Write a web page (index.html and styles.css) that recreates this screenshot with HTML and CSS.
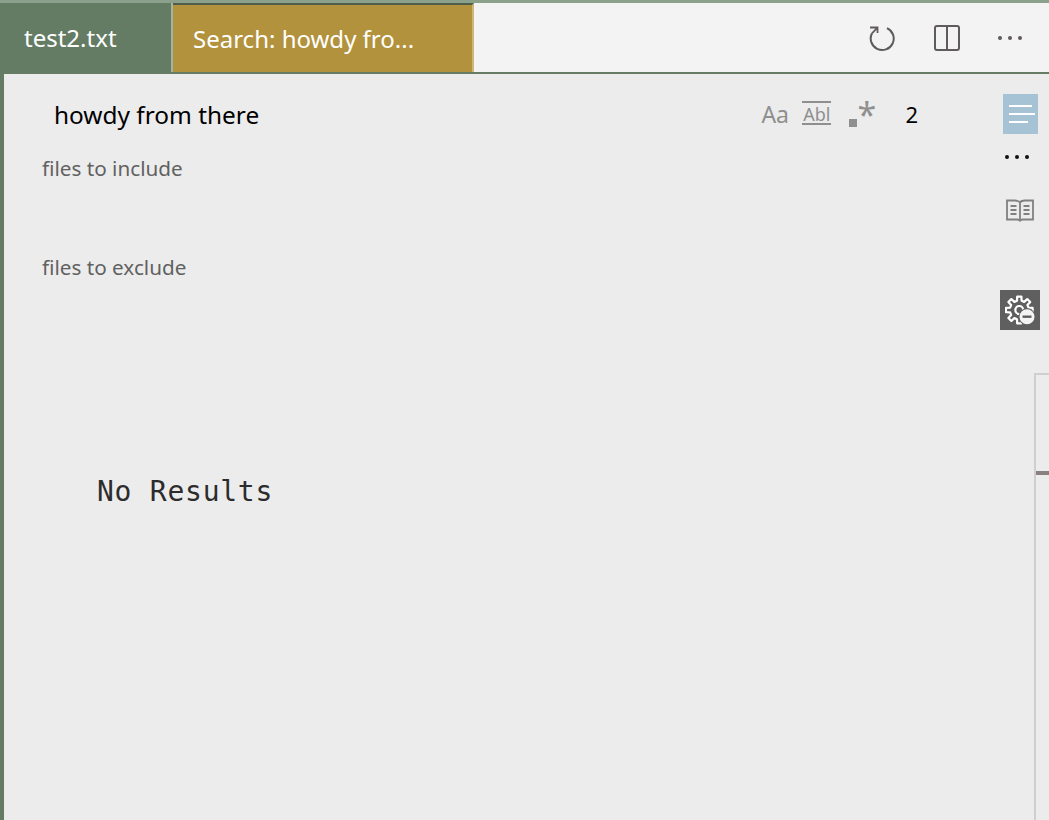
FILE: index.html
```html
<!DOCTYPE html>
<html lang="en">
<head>
<meta charset="utf-8">
<title>Search</title>
<link rel="stylesheet" href="styles.css">
</head>
<body>
<div class="app">
  <div class="tabbar">
    <div class="tab tab-file">test2.txt</div>
    <div class="tab tab-search">Search: howdy fro...</div>
    <div class="actions">
      <svg class="act act-refresh" viewBox="0 0 28 28" width="28" height="28" fill="none" stroke="#5f5a5c" stroke-width="2">
        <path d="M19 4.100A11.500 11.500 0 1 1 4 9.300"/>
        <path d="M2 3.500H9.500V9M9.500 3.500L4 9.300" stroke-width="1.800"/>
      </svg>
      <svg class="act act-split" viewBox="0 0 28 28" width="28" height="28" fill="none" stroke="#5f5a5c" stroke-width="2">
        <rect x="2" y="2" width="24" height="24" rx="2"/>
        <path d="M14 2V26"/>
      </svg>
      <svg class="act act-more" viewBox="0 0 26 6" width="26" height="6" fill="#5f5a5c">
        <circle cx="3" cy="3" r="2"/><circle cx="13" cy="3" r="2"/><circle cx="23" cy="3" r="2"/>
      </svg>
    </div>
  </div>
  <div class="main">
    <div class="panel">
      <div class="query-row">
        <span class="query">howdy from there</span>
        <div class="opts">
          <span class="opt-case">Aa</span>
          <span class="opt-word">Abl</span>
          <span class="opt-regex"><i class="dot"></i><span class="star">*</span></span>
          <span class="count">2</span>
        </div>
      </div>
      <div class="label label-include">files to include</div>
      <div class="label label-exclude">files to exclude</div>
      <div class="empty">No Results</div>
    </div>
    <div class="side">
      <div class="tile tile-list">
        <svg viewBox="0 0 28 20" width="28" height="20" fill="none" stroke="#fff" stroke-width="2">
          <path d="M1 2H24M1 10H27M1 18H20"/>
        </svg>
      </div>
      <svg class="side-more" viewBox="0 0 26 6" width="26" height="6" fill="#111">
        <circle cx="3" cy="3" r="2"/><circle cx="13" cy="3" r="2"/><circle cx="23" cy="3" r="2"/>
      </svg>
      <svg class="side-book" viewBox="0 0 28 24" width="28" height="24" fill="none" stroke="#808080" stroke-width="1.800">
        <path d="M14 3.500C13 2 11 1.500 9 1.500H1V20.500H11C12.500 20.500 14 21 14 22.500C14 21 15.500 20.500 17 20.500H27V1.500H19C17 1.500 15 2 14 3.500ZM14 3.500V22"/>
        <path d="M4.500 7H10.500M4.500 11H10.500M4.500 15H10.500M17.500 7H23.500M17.500 11H23.500M17.500 15H23.500"/>
      </svg>
      <div class="tile tile-gear">
        <svg viewBox="0 0 30 30" width="30" height="30">
          <g transform="translate(14.300 15)" fill="none" stroke="#fff" stroke-width="2.200" stroke-linejoin="round">
            <polygon points="2.300,-9.220 4.890,-8.140 7.940,-10.920 10.920,-7.940 8.140,-4.890 9.220,-2.300 13.330,-2.110 13.330,2.110 9.220,2.300 8.140,4.890 10.920,7.940 7.940,10.920 4.890,8.140 2.300,9.220 2.110,13.330 -2.110,13.330 -2.300,9.220 -4.890,8.140 -7.940,10.920 -10.920,7.940 -8.140,4.890 -9.220,2.300 -13.330,2.110 -13.330,-2.110 -9.220,-2.300 -8.140,-4.890 -10.920,-7.940 -7.940,-10.920 -4.890,-8.140 -2.300,-9.220 -2.110,-13.330 2.110,-13.330"/>
            <circle r="4"/>
          </g>
          <circle cx="22" cy="21.700" r="8.500" fill="#5f5f5f"/>
          <circle cx="22" cy="21.700" r="7.500" fill="#f4f4f4"/>
          <path d="M17.500 21.700H26.500" stroke="#5f5f5f" stroke-width="2.400"/>
        </svg>
      </div>
      <div class="track"><div class="thumb"></div></div>
    </div>
  </div>
</div>
</body>
</html>
```

FILE: styles.css
```css
* { box-sizing: border-box; }
html, body { margin: 0; height: 100%; overflow: hidden; }
body { font-family: "Noto Sans", "Open Sans", sans-serif; background: #ececec; }

.app { display: flex; flex-direction: column; height: 820px; border-top: 3px solid #8ba18c; }

.tabbar { display: flex; height: 71px; flex: none; background: #f3f3f3; border-bottom: 2px solid #647c64; }
.tab { display: flex; align-items: center; height: 69px; color: #fff; font-size: 24px; white-space: nowrap; }
.tab-file { width: 173px; padding-left: 24px; background: #647c64; border-right: 2px solid #a3b4a3; }
.tab-search { width: 301px; padding-left: 20px; background: #b2923c; border-top: 2px solid #4f5e4b; border-right: 2px solid #cdb67a; }

.actions { margin-left: auto; display: flex; align-items: center; padding-top: 1px; padding-right: 26px; }
.act-split { margin-left: 37px; }
.act-more { margin-left: 36px; }

.main { flex: 1; display: flex; min-height: 0; border-left: 4px solid #647c64; background: #ececec; }

.panel { flex: 1; min-width: 0; padding-left: 38px; }
.query-row { display: flex; align-items: center; height: 32px; margin-top: 24px; padding-left: 12px; padding-right: 86px; }
.query { color: #000; font-size: 24.400px; }
.opts { margin-left: auto; display: flex; align-items: center; color: #8f8f8f; }
.opt-case { font-size: 23px; letter-spacing: -.4px; }
.opt-word { margin-left: 14px; margin-bottom: 2px; width: 29px; height: 24px; border-top: 2px solid #8f8f8f; border-bottom: 2px solid #8f8f8f; font-size: 18px; line-height: 22px; text-align: center; }
.opt-regex { margin-left: 17px; position: relative; display: block; width: 26px; height: 26px; }
.dot { position: absolute; left: 1px; bottom: 0; width: 8px; height: 8px; background: #8f8f8f; }
.star { position: absolute; left: 9px; top: -4px; font-size: 34px; line-height: 34px; }
.count { margin-left: 31px; color: #000; font-size: 22px; }

.label { color: #616161; font-size: 20.700px; }
.label-include { margin-top: 23px; height: 30px; line-height: 30px; }
.label-exclude { margin-top: 69px; height: 30px; line-height: 30px; }

.empty { margin-top: 193px; margin-left: 55px; color: #2c2c2c; font-family: "DejaVu Sans Mono", monospace; font-size: 28px; line-height: 34px; letter-spacing: .75px; }

.side { flex: none; width: 49px; margin-left: -4px; display: flex; flex-direction: column; align-items: flex-start; }
.tile { display: flex; align-items: center; justify-content: center; }
.tile-list { width: 35px; height: 40px; margin-top: 20px; margin-left: 3px; background: #a6c2d5; padding-left: 3px; }
.side-more { margin-top: 20px; margin-left: 4px; }
.side-book { margin-top: 39px; margin-left: 6px; }
.tile-gear { width: 40px; height: 40px; margin-top: 67px; background: #5f5f5f; }
.track { flex: 1; width: 15px; margin-top: 43px; margin-left: 34px; border-left: 2px solid #cfcfcf; border-top: 2px solid #cfcfcf; padding-top: 96px; }
.thumb { height: 4px; background: #8a8080; }
```
